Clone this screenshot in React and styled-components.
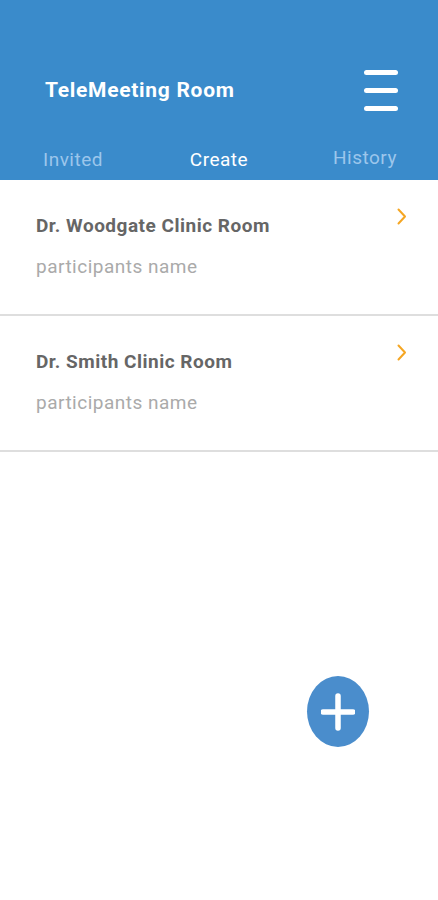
import React, { useState } from 'react';
import styled, { createGlobalStyle } from 'styled-components';

const rooms = [
  { id: 1, name: 'Dr. Woodgate Clinic Room', participants: 'participants name' },
  { id: 2, name: 'Dr. Smith Clinic Room', participants: 'participants name' },
];

const tabs = ['Invited', 'Create', 'History'];

const App = () => {
  const [activeTab, setActiveTab] = useState('Create');

  return (
    <>
      <GlobalStyle />
      <Page>
        <Header>
          <TopBar>
            <Title>TeleMeeting Room</Title>
            <MenuButton aria-label="menu">
              <MenuLine />
              <MenuLine />
              <MenuLine />
            </MenuButton>
          </TopBar>
          <TabRow>
            {tabs.map((tab) => (
              <Tab
                key={tab}
                $active={tab === activeTab}
                $raise={tab === 'History'}
                onClick={() => setActiveTab(tab)}
              >
                {tab}
              </Tab>
            ))}
          </TabRow>
        </Header>

        <RoomList>
          {rooms.map((room) => (
            <RoomItem key={room.id}>
              <RoomInfo>
                <RoomName>{room.name}</RoomName>
                <Participants>{room.participants}</Participants>
              </RoomInfo>
              <Chevron width="10" height="17" viewBox="0 0 10 17">
                <path d="M1.5 1.5 L8 8.5 L1.5 15.5" fill="none" stroke="#f5a623" strokeWidth="2" strokeLinecap="round" strokeLinejoin="round" />
              </Chevron>
            </RoomItem>
          ))}
        </RoomList>

        {/* Floating add button */}
        <AddButton aria-label="add room">
          <svg width="34" height="38" viewBox="0 0 34 38">
            <path d="M17 3 V35 M2 19 H32" stroke="#fff" strokeWidth="5.5" strokeLinecap="round" />
          </svg>
        </AddButton>
      </Page>
    </>
  );
};

export default App;

const GlobalStyle = createGlobalStyle`
  html, body {
    margin: 0;
    padding: 0;
    background: #ffffff;
    font-family: Roboto, "Liberation Sans", sans-serif;
  }
`;

const Page = styled.div`
  position: relative;
  width: 438px;
  min-height: 900px;
  background: #ffffff;
`;

const Header = styled.header`
  height: 180px;
  background-color: #3a8bcb;
  display: flex;
  flex-direction: column;
`;

const TopBar = styled.div`
  height: 100px;
  padding: 40px 40px 0 45px;
  display: flex;
  align-items: center;
  justify-content: space-between;
`;

const Title = styled.h1`
  margin: 0;
  color: #ffffff;
  font-size: 21px;
  font-weight: 700;
  letter-spacing: 0.7px;
`;

const MenuButton = styled.button`
  width: 34px;
  height: 41px;
  padding: 0;
  background: transparent;
  border: none;
  display: flex;
  flex-direction: column;
  justify-content: space-between;
  cursor: pointer;
`;

const MenuLine = styled.span`
  display: block;
  height: 5px;
  border-radius: 3px;
  background: #ffffff;
`;

const TabRow = styled.nav`
  height: 40px;
  display: grid;
  grid-template-columns: repeat(3, 1fr);
  align-items: center;
`;

const Tab = styled.div`
  text-align: center;
  font-size: 19px;
  line-height: 24px;
  letter-spacing: 0.5px;
  color: ${({ $active }) => ($active ? '#ffffff' : '#9cc6eb')};
  margin-top: ${({ $raise }) => ($raise ? '-4px' : '0')};
  cursor: pointer;
`;

const RoomList = styled.div`
  display: flex;
  flex-direction: column;
`;

const RoomItem = styled.div`
  height: 106px;
  padding: 28px 31px 0 36px;
  display: flex;
  justify-content: space-between;
  align-items: flex-start;
  border-bottom: 2px solid #dedede;
`;

const RoomInfo = styled.div`
  padding-top: 6px;
  display: flex;
  flex-direction: column;
  gap: 17px;
`;

const RoomName = styled.div`
  font-size: 19px;
  line-height: 24px;
  font-weight: 700;
  letter-spacing: 0.5px;
  color: #666666;
`;

const Participants = styled.div`
  font-size: 19px;
  line-height: 24px;
  letter-spacing: 0.5px;
  color: #aaaaaa;
`;

const Chevron = styled.svg`
  flex-shrink: 0;
`;

const AddButton = styled.button`
  position: absolute;
  left: 307px;
  top: 676px;
  width: 62px;
  height: 71px;
  border-radius: 50%;
  border: none;
  padding: 0;
  background: #4a8dcc;
  display: flex;
  align-items: center;
  justify-content: center;
  cursor: pointer;
`;
